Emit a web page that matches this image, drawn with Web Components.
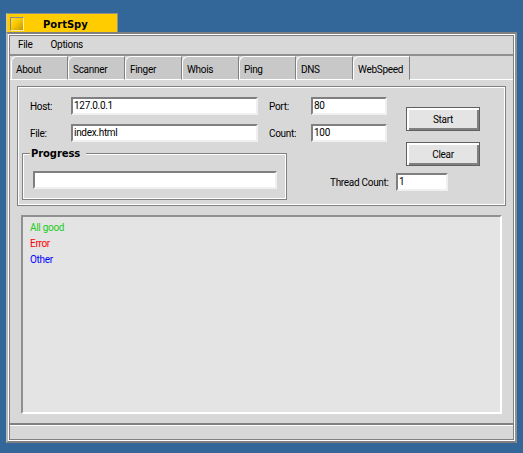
<!DOCTYPE html>
<html>
<head>
<meta charset="utf-8">
<title>PortSpy</title>
<style>
  html, body { margin: 0; height: 100%; }
  body {
    background: #336699;
    font: 10px Roboto, "Liberation Sans", Arial, sans-serif;
    letter-spacing: -0.3px;
    color: #000;
    padding: 13px 6px 0;
    box-sizing: border-box;
    overflow: hidden;
  }
</style>
</head>
<body>
<ps-window title="PortSpy">
  <ps-menubar><span>File</span><span>Options</span></ps-menubar>
  <ps-tabs>
    <ps-tab>About</ps-tab>
    <ps-tab>Scanner</ps-tab>
    <ps-tab>Finger</ps-tab>
    <ps-tab>Whois</ps-tab>
    <ps-tab>Ping</ps-tab>
    <ps-tab>DNS</ps-tab>
    <ps-tab active>WebSpeed</ps-tab>
  </ps-tabs>
  <ps-page>
    <ps-form>
      <ps-field slot="host" label="Host:" value="127.0.0.1" label-width="41" width="187"></ps-field>
      <ps-field slot="host" label="File:" value="index.html" label-width="41" width="187"></ps-field>
      <ps-field slot="port" label="Port:" value="80" label-width="42" width="76"></ps-field>
      <ps-field slot="port" label="Count:" value="100" label-width="42" width="76"></ps-field>
      <ps-button slot="actions">Start</ps-button>
      <ps-button slot="actions">Clear</ps-button>
      <ps-group slot="progress" label="Progress"><ps-input width="244"></ps-input></ps-group>
      <ps-field slot="thread" label="Thread Count:" value="1" label-width="66" width="52"></ps-field>
    </ps-form>
    <ps-log>
      <div style="color:#22cc22">All good</div>
      <div style="color:#ff0000">Error</div>
      <div style="color:#0000ff">Other</div>
    </ps-log>
  </ps-page>
  <ps-status></ps-status>
</ps-window>

<script>
class PsWindow extends HTMLElement {
  constructor() {
    super();
    this.attachShadow({mode: 'open'});
  }

  connectedCallback() {
    this.shadowRoot.innerHTML = `
      <style>
        :host { display: block; width: 511px; }
        .title {
          box-sizing: border-box;
          width: 112px;
          height: 20px;
          margin-bottom: -1px;
          background: #ffcc00;
          border: 1px solid #909090;
          border-bottom: none;
          border-left-color: #c8c8c8;
          display: flex;
          align-items: flex-start;
          padding: 3px 0 0 3px;
          font: bold 10px "DejaVu Sans", sans-serif;
          letter-spacing: 0;
        }
        .icon {
          box-sizing: border-box;
          flex: none;
          width: 14px;
          height: 14px;
          border: 1px solid;
          border-color: #8a8a8a #fff2b0 #fff2b0 #8a8a8a;
          background: linear-gradient(135deg, #ffd633 0%, #ffcc00 40%, #c89600 100%);
        }
        .name { margin: 2px 0 0 19px; }
        .frame {
          position: relative;
          box-sizing: border-box;
          height: 411px;
          background: #d8d8d8;
          border: 2px solid;
          border-color: #808080 #909090 #808080 #b8b8b8;
          box-shadow: inset 0 0 0 1px #fff, inset 0 0 0 2px #808080;
          padding: 2px;
          display: flex;
          flex-direction: column;
        }
      </style>
      <div class="title">
        <span class="icon"></span>
        <span class="name">${this.getAttribute('title')}</span>
      </div>
      <div class="frame"><slot></slot></div>
    `;
  }
}

class PsMenubar extends HTMLElement {
  constructor() {
    super();
    this.attachShadow({mode: 'open'});
  }

  connectedCallback() {
    this.shadowRoot.innerHTML = `
      <style>
        :host {
          display: flex;
          box-sizing: border-box;
          height: 21px;
          padding: 0 0 1px 8px;
          gap: 18px;
          align-items: center;
          border-bottom: 2px solid #909090;
        }
      </style>
      <slot></slot>
    `;
  }
}

class PsTabs extends HTMLElement {
  constructor() {
    super();
    this.attachShadow({mode: 'open'});
  }

  connectedCallback() {
    this.shadowRoot.innerHTML = `
      <style>
        :host {
          display: flex;
          height: 24px;
          padding-left: 1px;
          box-shadow: inset 0 -1px 0 #fff;
        }
      </style>
      <slot></slot>
    `;
  }
}

class PsTab extends HTMLElement {
  constructor() {
    super();
    this.attachShadow({mode: 'open'});
  }

  connectedCallback() {
    this.shadowRoot.innerHTML = `
      <style>
        :host {
          display: flex;
          box-sizing: border-box;
          width: 57px;
          height: 24px;
          align-items: center;
          padding: 2px 0 0 4px;
          background: #c8c8c8;
          border-top: 1px solid #fff;
          border-left: 1px solid #fff;
          border-right: 1px solid #808080;
          border-bottom: 1px solid #fff;
          border-top-left-radius: 6px;
        }
        :host([active]) {
          background: #d8d8d8;
          border-bottom-color: #d8d8d8;
        }
      </style>
      <slot></slot>
    `;
  }
}

class PsPage extends HTMLElement {
  constructor() {
    super();
    this.attachShadow({mode: 'open'});
  }

  connectedCallback() {
    this.shadowRoot.innerHTML = `
      <style>
        :host {
          display: flex;
          flex-direction: column;
          flex: 1;
          gap: 9px;
          padding: 6px 7px 9px 7px;
        }
      </style>
      <slot></slot>
    `;
  }
}

class PsForm extends HTMLElement {
  constructor() {
    super();
    this.attachShadow({mode: 'open'});
  }

  connectedCallback() {
    this.shadowRoot.innerHTML = `
      <style>
        :host {
          display: grid;
          box-sizing: border-box;
          height: 120px;
          grid-template-columns: 236px 138px 84px;
          grid-template-rows: 56px 47px;
          padding: 10px 0 0 4px;
          border: 1px solid #808080;
          box-shadow: inset 0 0 0 1px #fff;
        }
        .host { grid-area: 1 / 1; padding-left: 8px; }
        .port { grid-area: 1 / 2; padding-left: 11px; }
        .host, .port { display: flex; flex-direction: column; gap: 9px; }
        .actions {
          grid-area: 1 / 3 / 3 / 4;
          display: flex;
          flex-direction: column;
          align-items: flex-start;
          gap: 11px;
          padding: 10px 0 0 10px;
        }
        .progress { grid-area: 2 / 1 / 3 / 3; }
        .thread { grid-area: 2 / 2 / 3 / 4; justify-self: end; align-self: start; padding: 20px 32px 0 0; }
      </style>
      <div class="host"><slot name="host"></slot></div>
      <div class="port"><slot name="port"></slot></div>
      <div class="actions"><slot name="actions"></slot></div>
      <div class="progress"><slot name="progress"></slot></div>
      <div class="thread"><slot name="thread"></slot></div>
    `;
  }
}

class PsInput extends HTMLElement {
  constructor() {
    super();
    this.attachShadow({mode: 'open'});
  }

  connectedCallback() {
    this.shadowRoot.innerHTML = `
      <style>
        :host {
          display: flex;
          box-sizing: border-box;
          width: ${this.getAttribute('width')}px;
          height: 18px;
          align-items: center;
          padding: 0 0 1px 1px;
          background: #fff;
          border: 2px solid;
          border-color: #808080 #f0f0f0 #f0f0f0 #808080;
        }
      </style>
      <span>${this.getAttribute('value') || ''}</span>
    `;
  }
}

class PsField extends HTMLElement {
  constructor() {
    super();
    this.attachShadow({mode: 'open'});
  }

  connectedCallback() {
    this.shadowRoot.innerHTML = `
      <style>
        :host { display: flex; align-items: center; }
        label { width: ${this.getAttribute('label-width')}px; }
      </style>
      <label>${this.getAttribute('label')}</label>
      <ps-input value="${this.getAttribute('value')}" width="${this.getAttribute('width')}"></ps-input>
    `;
  }
}

class PsButton extends HTMLElement {
  constructor() {
    super();
    this.attachShadow({mode: 'open'});
  }

  connectedCallback() {
    this.shadowRoot.innerHTML = `
      <style>
        :host {
          display: flex;
          box-sizing: border-box;
          width: 74px;
          height: 24px;
          align-items: center;
          justify-content: center;
          padding-top: 1px;
          background: #e4e4e4;
          border: 1px solid #606060;
          box-shadow: inset 1px 1px 0 1px #fff, inset -1px -1px 0 1px #808080;
        }
      </style>
      <slot></slot>
    `;
  }
}

class PsGroup extends HTMLElement {
  constructor() {
    super();
    this.attachShadow({mode: 'open'});
  }

  connectedCallback() {
    this.shadowRoot.innerHTML = `
      <style>
        :host { display: block; width: 265px; height: 47px; }
        .box {
          box-sizing: border-box;
          height: 47px;
          border: 1px solid #808080;
          box-shadow: inset 0 0 0 1px #fff;
          padding: 20px 0 0 10px;
        }
        .legend {
          display: block;
          width: max-content;
          margin: -26px 0 12px -3px;
          padding: 0 6px 0 1px;
          background: #d8d8d8;
          font: bold 10px "DejaVu Sans", sans-serif;
          letter-spacing: -0.1px;
        }
      </style>
      <div class="box">
        <span class="legend">${this.getAttribute('label')}</span>
        <slot></slot>
      </div>
    `;
  }
}

class PsLog extends HTMLElement {
  constructor() {
    super();
    this.attachShadow({mode: 'open'});
  }

  connectedCallback() {
    this.shadowRoot.innerHTML = `
      <style>
        :host {
          display: block;
          box-sizing: border-box;
          height: 199px;
          margin: 0 4px;
          padding: 3px 0 0 7px;
          background: #e4e4e4;
          line-height: 16px;
          border: 2px solid;
          border-color: #909090 #fff #fff #909090;
        }
      </style>
      <slot></slot>
    `;
  }
}

class PsStatus extends HTMLElement {
  constructor() {
    super();
    this.attachShadow({mode: 'open'});
  }

  connectedCallback() {
    this.shadowRoot.innerHTML = `
      <style>
        :host {
          display: block;
          flex: none;
          box-sizing: border-box;
          height: 16px;
          border-top: 2px solid #808080;
          box-shadow: inset 0 1px 0 #fff;
        }
      </style>
    `;
  }
}

customElements.define('ps-window', PsWindow);
customElements.define('ps-menubar', PsMenubar);
customElements.define('ps-tabs', PsTabs);
customElements.define('ps-tab', PsTab);
customElements.define('ps-page', PsPage);
customElements.define('ps-form', PsForm);
customElements.define('ps-input', PsInput);
customElements.define('ps-field', PsField);
customElements.define('ps-button', PsButton);
customElements.define('ps-group', PsGroup);
customElements.define('ps-log', PsLog);
customElements.define('ps-status', PsStatus);
</script>
</body>
</html>
